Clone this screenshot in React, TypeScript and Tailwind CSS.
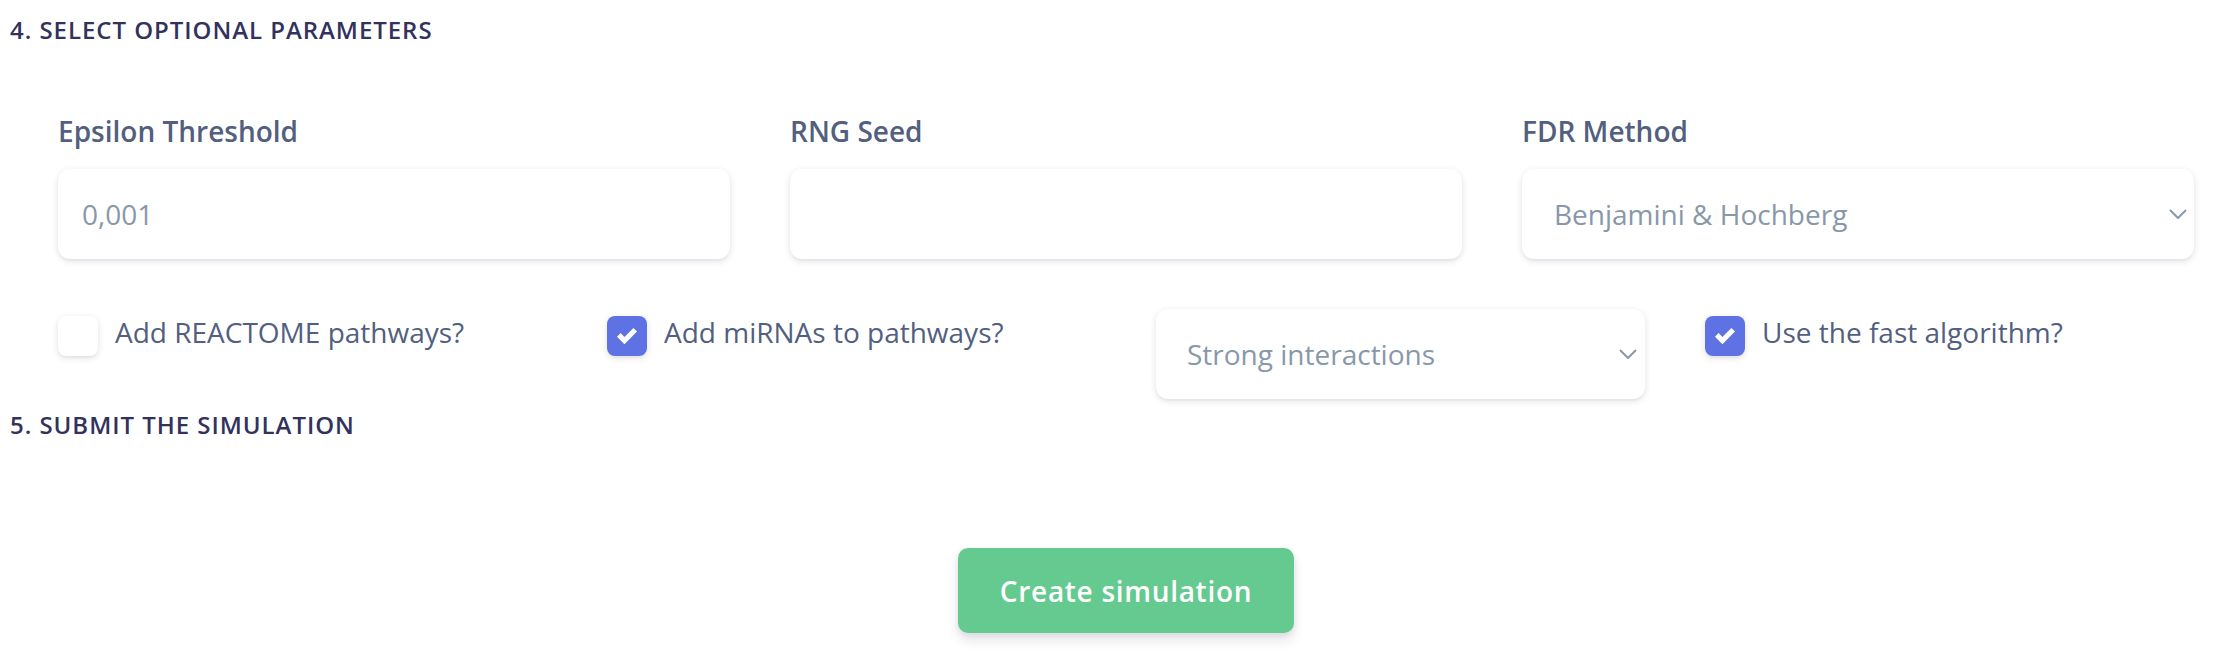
import React from 'react';

const Chevron = () => (
  <svg width="18" height="10" viewBox="0 0 18 10" fill="none">
    <polyline points="1,1 9,9 17,1" stroke="#8898aa" strokeWidth="2" />
  </svg>
);

const Check = () => (
  <svg width="20" height="20" viewBox="0 0 8 8">
    <path fill="#ffffff" d="M6.564.75l-3.59 3.612-1.538-1.55L0 4.26 2.974 7.25 8 2.193z" />
  </svg>
);

const Checkbox: React.FC<{ label: string; checked?: boolean }> = ({ label, checked }) => (
  <label className="flex items-start gap-[17px] mt-[2px] cursor-pointer">
    <span
      className={
        checked
          ? 'mt-[5px] w-[40px] h-[40px] shrink-0 rounded-[8px] bg-[#5e72e4] flex items-center justify-center shadow-[0_2px_6px_rgba(50,50,93,0.15),0_2px_0_rgba(0,0,0,0.02)]'
          : 'mt-[5px] w-[40px] h-[40px] shrink-0 rounded-[8px] bg-white shadow-[0_2px_6px_rgba(50,50,93,0.15),0_2px_0_rgba(0,0,0,0.02)]'
      }
    >
      {checked && <Check />}
    </span>
    <span className="text-[28px] leading-[42px] text-[#525f7f]">{label}</span>
  </label>
);

const boxCls =
  'h-[90px] rounded-[12px] bg-white shadow-[0_2px_6px_rgba(50,50,93,0.15),0_2px_0_rgba(0,0,0,0.02)] flex items-center text-[28px] text-[#8898aa]';

const Heading: React.FC<{ children: React.ReactNode }> = ({ children }) => (
  <h6 className="pl-[10px] text-[24px] leading-[24px] font-semibold uppercase tracking-[0.04em] text-[#32325d]">
    {children}
  </h6>
);

export default function App() {
  return (
    <div className="w-[2221px] h-[653px] overflow-hidden bg-white font-['Open_Sans',sans-serif] pt-[18px]">
      <Heading>4. Select optional parameters</Heading>

      <div className="ml-[28px] w-[2196px] grid grid-cols-3 mt-[68px]">
        <div className="px-[30px]">
          <div className="text-[28px] leading-[42px] font-semibold text-[#525f7f] mb-[17px]">Epsilon Threshold</div>
          <div className={`${boxCls} px-[24px]`}>0,001</div>
        </div>
        <div className="px-[30px]">
          <div className="text-[28px] leading-[42px] font-semibold text-[#525f7f] mb-[17px]">RNG Seed</div>
          <div className={`${boxCls} px-[24px]`}></div>
        </div>
        <div className="px-[30px]">
          <div className="text-[28px] leading-[42px] font-semibold text-[#525f7f] mb-[17px]">FDR Method</div>
          <div className={`${boxCls} pl-[32px] pr-[7px] justify-between`}>
            <span>Benjamini &amp; Hochberg</span>
            <Chevron />
          </div>
        </div>
      </div>

      <div className="ml-[28px] w-[2196px] grid grid-cols-4 mt-[50px]">
        <div className="px-[30px]">
          <Checkbox label="Add REACTOME pathways?" />
        </div>
        <div className="px-[30px]">
          <Checkbox label="Add miRNAs to pathways?" checked />
        </div>
        <div className="px-[30px]">
          <div className={`${boxCls} pl-[31px] pr-[8px] justify-between`}>
            <span>Strong interactions</span>
            <Chevron />
          </div>
        </div>
        <div className="px-[30px]">
          <Checkbox label="Use the fast algorithm?" checked />
        </div>
      </div>

      <div className="mt-[14px]">
        <Heading>5. Submit the simulation</Heading>
      </div>

      <div className="ml-[28px] w-[2196px] flex justify-center mt-[111px]">
        <button className="h-[85px] px-[42px] rounded-[10px] bg-[#64ca90] text-white text-[28px] font-semibold tracking-[0.025em] shadow-[0_8px_12px_rgba(50,50,93,0.11),0_2px_6px_rgba(0,0,0,0.08)]">
          Create simulation
        </button>
      </div>
    </div>
  );
}
